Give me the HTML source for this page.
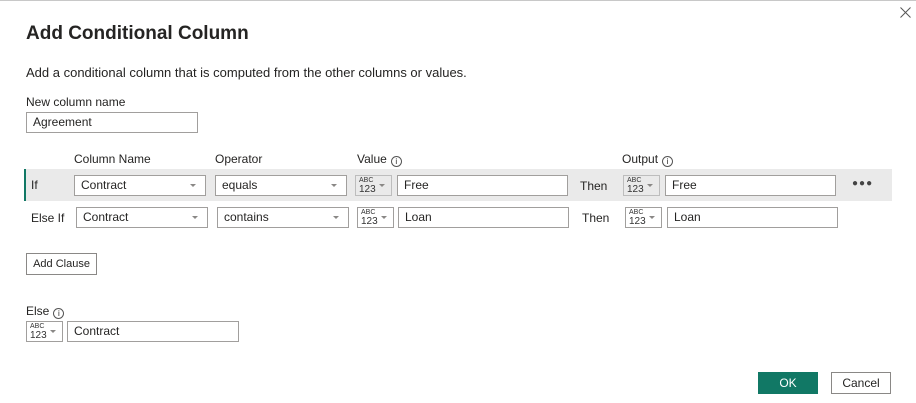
<!DOCTYPE html>
<html><head><style>
*{box-sizing:border-box;margin:0;padding:0}
body{width:916px;height:403px;background:#fff;position:relative;overflow:hidden;font-family:"Liberation Sans",sans-serif;color:#252423;font-size:12px;border-top:1px solid #c8c8c8}
.a{position:absolute;white-space:nowrap}
.in{position:absolute;height:21px;border:1px solid #a19f9d;background:#fff;padding:0 0 0 6px;line-height:19px;font-size:12px;color:#252423}
.dd::after{content:"";position:absolute;right:9px;top:8px;border-left:3px solid transparent;border-right:3px solid transparent;border-top:3px solid #8a8886}
.abc{position:absolute;width:37px;height:21px;border:1px solid #a19f9d;background:#fff}
.abc.g{background:#eaeaea;border-color:#bdbdbd}
.abc span{position:absolute;left:3px;top:1px;font-size:7px;line-height:7px;color:#333}
.abc b{position:absolute;left:3px;top:9px;font-size:10px;line-height:10px;font-weight:normal;color:#333}
.abc::after{content:"";position:absolute;right:6px;top:8px;border-left:3px solid transparent;border-right:3px solid transparent;border-top:3px solid #8a8886}
.info{display:inline-block;width:11px;height:11px;border:1px solid #555;border-radius:50%;font-size:8px;line-height:9px;text-align:center;vertical-align:-1px;margin-left:4px}
</style></head><body>
<svg class="a" style="left:900px;top:6px" width="11" height="11"><path d="M0.5 0.5L10.5 10.5M10.5 0.5L0.5 10.5" stroke="#555" stroke-width="1"/></svg>
<div class="a" style="left:26px;top:22px;font-size:19px;font-weight:bold;color:#252423">Add Conditional Column</div>
<div class="a" style="left:26px;top:64px;font-size:13px">Add a conditional column that is computed from the other columns or values.</div>
<div class="a" style="left:26px;top:94px">New column name</div>
<div class="in" style="left:26px;top:111px;width:172px">Agreement</div>

<div class="a" style="left:74px;top:151px">Column Name</div>
<div class="a" style="left:215px;top:151px">Operator</div>
<div class="a" style="left:357px;top:151px">Value<span class="info">i</span></div>
<div class="a" style="left:622px;top:151px">Output<span class="info">i</span></div>

<div class="a" style="left:24px;top:168px;width:868px;height:32px;background:#eaeaea;border-left:2px solid #117865"></div>
<div class="a" style="left:31px;top:177px">If</div>
<div class="in dd" style="left:74px;top:174px;width:132px">Contract</div>
<div class="in dd" style="left:215px;top:174px;width:132px">equals</div>
<div class="abc g" style="left:355px;top:174px"><span>ABC</span><b>123</b></div>
<div class="in" style="left:397px;top:174px;width:171px">Free</div>
<div class="a" style="left:580px;top:178px">Then</div>
<div class="abc g" style="left:623px;top:174px"><span>ABC</span><b>123</b></div>
<div class="in" style="left:665px;top:174px;width:171px">Free</div>
<div class="a" style="left:852px;top:177px;font-size:10px;letter-spacing:1px;color:#444">●●●</div>

<div class="a" style="left:31px;top:210px">Else If</div>
<div class="in dd" style="left:76px;top:206px;width:132px">Contract</div>
<div class="in dd" style="left:217px;top:206px;width:132px">contains</div>
<div class="abc" style="left:357px;top:206px"><span>ABC</span><b>123</b></div>
<div class="in" style="left:398px;top:206px;width:171px">Loan</div>
<div class="a" style="left:582px;top:210px">Then</div>
<div class="abc" style="left:625px;top:206px"><span>ABC</span><b>123</b></div>
<div class="in" style="left:667px;top:206px;width:171px">Loan</div>

<div class="a" style="left:26px;top:252px;width:71px;height:22px;border:1px solid #8a8886;font-size:11px;line-height:20px;text-align:center">Add Clause</div>

<div class="a" style="left:26px;top:303px">Else<span class="info">i</span></div>
<div class="abc" style="left:26px;top:320px"><span>ABC</span><b>123</b></div>
<div class="in" style="left:67px;top:320px;width:172px">Contract</div>

<div class="a" style="left:758px;top:371px;width:60px;height:22px;background:#117865;color:#fff;text-align:center;line-height:22px">OK</div>
<div class="a" style="left:831px;top:371px;width:60px;height:22px;border:1px solid #8a8886;text-align:center;line-height:20px">Cancel</div>
</body></html>
